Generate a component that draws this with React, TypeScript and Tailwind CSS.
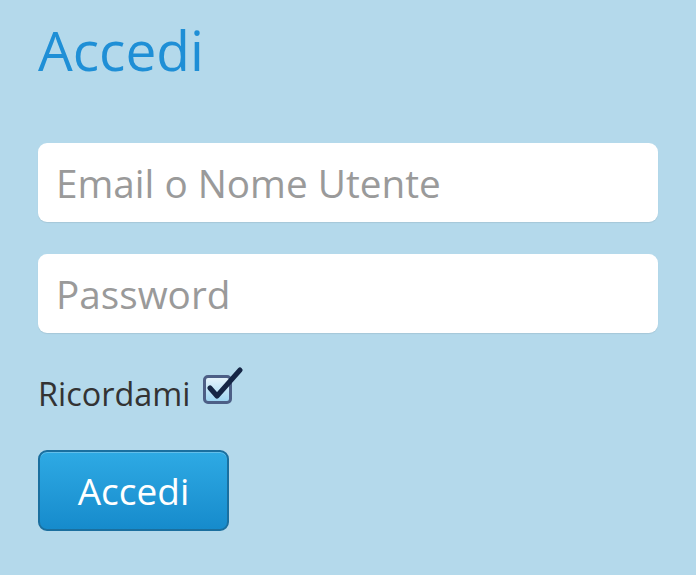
export default function App() {
  return (
    <div
      className="min-h-[575px] w-full bg-[#b4d9eb] pl-[38px] pr-[38px] pt-[22px]"
      style={{ fontFamily: '"Open Sans", "DejaVu Sans", sans-serif' }}
    >
      <h1 className="text-[55px] leading-none font-normal text-[#1f8fd6]">Accedi</h1>

      <form className="mt-[66px] flex flex-col" onSubmit={(e) => e.preventDefault()}>
        <input
          type="text"
          placeholder="Email o Nome Utente"
          className="h-[79px] w-[620px] rounded-[9px] bg-white px-[18px] text-[38.7px] text-[#555] placeholder:text-[#9a9a9a] shadow-[0_1px_1px_rgba(0,0,0,0.08)] outline-none"
        />
        <input
          type="password"
          placeholder="Password"
          className="mt-[32px] h-[79px] w-[620px] rounded-[9px] bg-white px-[18px] text-[38.7px] text-[#555] placeholder:text-[#9a9a9a] shadow-[0_1px_1px_rgba(0,0,0,0.08)] outline-none"
        />

        {/* Ricordami + checkbox */}
        <label className="mt-[44px] flex items-start text-[32.4px] leading-none text-[#333]">
          <span>Ricordami</span>
          <span className="relative ml-[13px] mt-[-2px] h-[29px] w-[29px] rounded-[5px] border-[3px] border-[#4d5f86] bg-gradient-to-b from-[#e4f3fb] to-[#9fd6f2]">
            <svg
              className="absolute left-[1px] top-[-12px]"
              width="36"
              height="36"
              viewBox="0 0 36 36"
              fill="none"
            >
              <path
                d="M3 22 L10 30 L33 4"
                stroke="#152544"
                strokeWidth="5"
                strokeLinecap="round"
                strokeLinejoin="round"
              />
            </svg>
          </span>
        </label>

        <button
          type="submit"
          className="mt-[41px] h-[81px] w-[191px] rounded-[9px] border-2 border-[#1a6f9f] bg-gradient-to-b from-[#2eaae4] to-[#168bcc] text-[37px] text-white shadow-[inset_0_1px_0_rgba(255,255,255,0.25)]"
        >
          Accedi
        </button>
      </form>
    </div>
  );
}
